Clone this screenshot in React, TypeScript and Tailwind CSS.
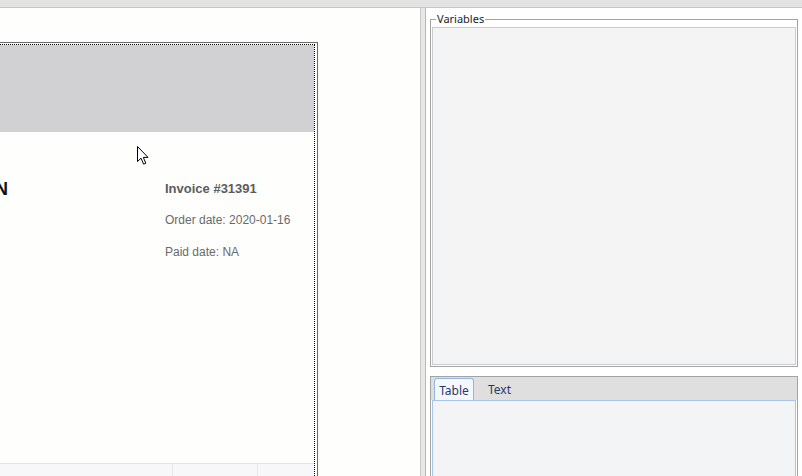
import React from "react";

function Cursor() {
  return (
    <svg width="13" height="20" viewBox="0 0 13 20" className="absolute left-[137px] top-[138px]">
      <path d="M0.5 0.5 L0.5 15.5 L4 12.2 L6.6 18.2 L8.8 17.2 L6.3 11.4 L11 11.4 Z" fill="#ffffff" stroke="#000000" strokeWidth="1" strokeLinejoin="miter" />
    </svg>
  );
}

export default function App() {
  return (
    <div className="w-[802px] h-[476px] overflow-hidden bg-white flex flex-col" style={{ fontFamily: "'Liberation Sans', Arial, sans-serif" }}>
      <div className="h-[8px] shrink-0 bg-[#e3e3e3] border-b border-[#b4c8e2]" />
      <div className="flex flex-1 min-h-0">
        {/* Left document pane */}
        <div className="relative w-[420px] shrink-0 bg-[#fefefd] overflow-hidden">
          <div className="mt-[34px] w-[318px] h-[500px] border-t border-r border-[#6b6b6b] pt-[1px] pr-[2px]">
            <div className="h-full border-t border-r border-dotted border-black flex flex-col bg-[#fefefd]">
              <div className="h-[87px] bg-[#d1d1d3] shrink-0" />
              <div className="flex h-[331px] shrink-0">
                <div className="w-[165px] shrink-0 overflow-hidden">
                  <div className="mt-[46px] ml-[-5px] text-[18px] font-bold text-[#111] leading-[22px]">N</div>
                </div>
                <div className="flex flex-col text-[#6a6a6a]">
                  <div className="mt-[49px] text-[13px] font-bold text-[#5c5c5c] leading-[16px]">Invoice #31391</div>
                  <div className="mt-[15px] text-[12px] leading-[16px]">Order date: 2020-01-16</div>
                  <div className="mt-[16px] text-[12px] leading-[16px]">Paid date: NA</div>
                </div>
              </div>
              <div className="flex flex-1 border-t border-[#e3e3e3] bg-[#f7f7fa]">
                <div className="w-[173px] border-r border-[#e6e6ea]" />
                <div className="w-[85px] border-r border-[#e6e6ea]" />
                <div className="flex-1" />
              </div>
            </div>
          </div>
          <Cursor />
        </div>
        {/* Splitter */}
        <div className="w-[6px] shrink-0 bg-[#e8e8e8] border-l border-[#c9c9c9] border-r border-r-[#b8b8b8]" />
        {/* Right pane */}
        <div className="flex-1 flex flex-col pl-[4px] pr-[4px] bg-white" style={{ fontFamily: "'Noto Sans', 'DejaVu Sans', sans-serif" }}>
          <div className="relative mt-[11px] h-[348px] shrink-0 border border-[#a3a3a3] pt-[7px] px-[1px] pb-[0px]">
            <div className="absolute left-[5px] top-[-9px] bg-white px-[1px] text-[11px] leading-[15px] text-[#222]">Variables</div>
            <div className="h-[338px] bg-[#f4f4f4] border border-[#c9ccd1]" />
          </div>
          <div className="mt-[9px] flex-1 flex flex-col border-t border-l border-r border-[#a3a3a3]">
            <div className="h-[23px] shrink-0 bg-[#dfdfdf] flex items-end pl-[3px]">
              <div className="h-[22px] w-[40px] flex items-center justify-center rounded-t-[3px] border border-b-0 border-[#93b6e2] bg-[#f4f7fb] text-[12px] text-[#1f3b6b] leading-none pt-[2px]">Table</div>
              <div className="h-[22px] ml-[14px] flex items-center text-[12px] text-[#1f3b6b] leading-none pt-[2px]">Text</div>
            </div>
            <div className="flex-1 ml-[1px] mr-[1px] border border-b-0 border-[#a8c4e6] bg-[#f3f4f5]" />
          </div>
        </div>
      </div>
    </div>
  );
}
